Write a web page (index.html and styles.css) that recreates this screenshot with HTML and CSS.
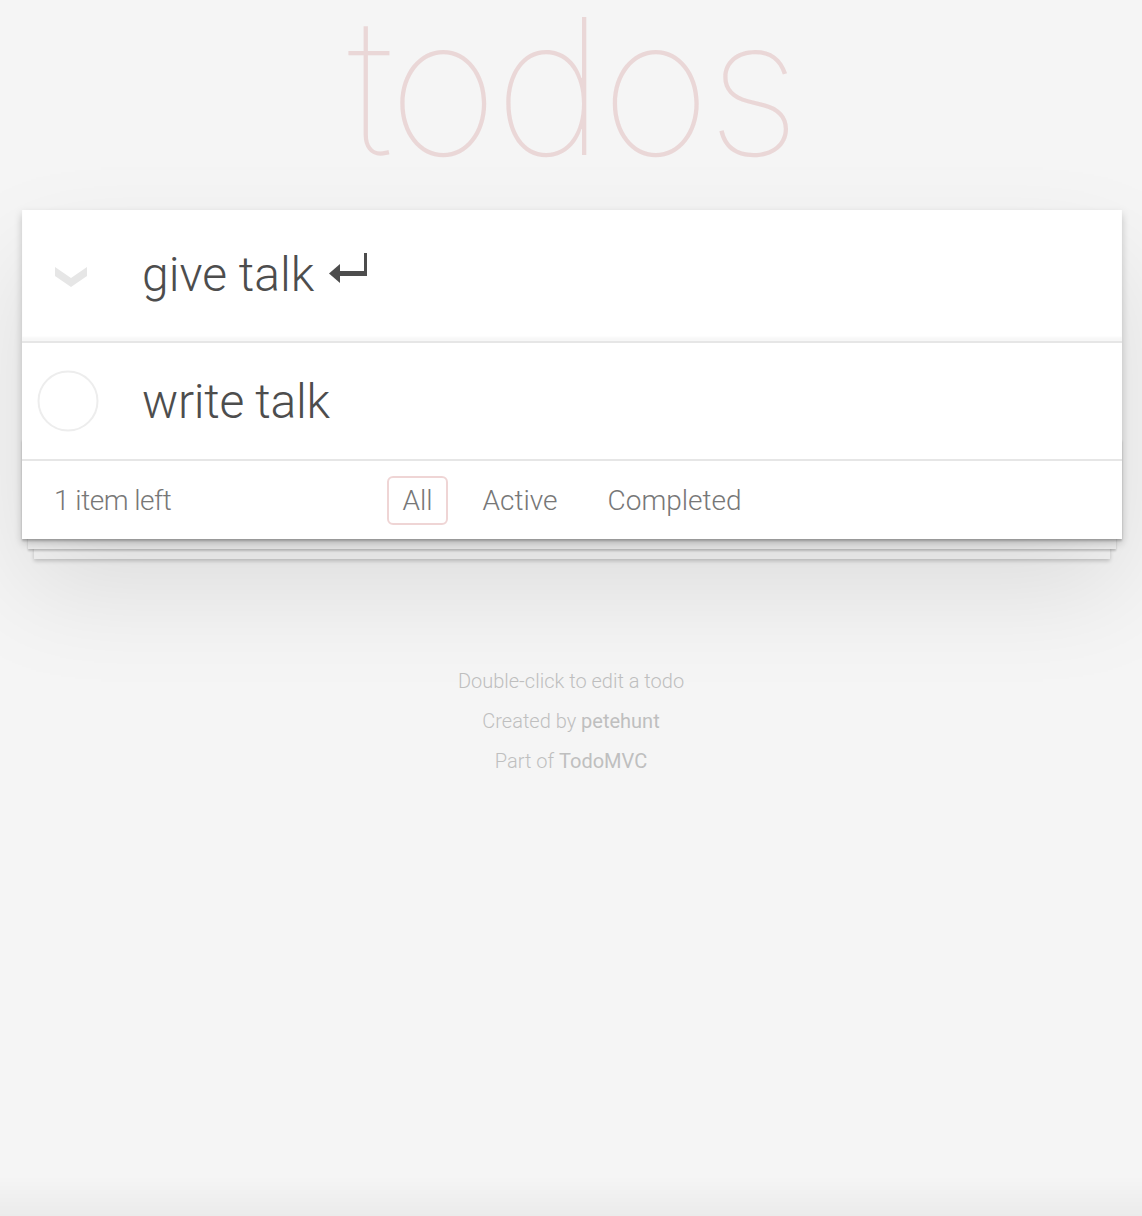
FILE: index.html
```html
<!DOCTYPE html>
<html lang="en">
<head>
<meta charset="utf-8">
<title>React • TodoMVC</title>
<link rel="stylesheet" href="styles.css">
</head>
<body>
<section class="todoapp">
  <header class="header">
    <h1 class="title">todos</h1>
  </header>
  <div class="card">
    <div class="new-row">
      <div class="toggle-all-cell">
        <svg class="chevron" width="32" height="22" viewBox="0 0 32 22"><polygon points="0,0 16,11 32,0 32,9 16,20 0,9" fill="#e6e6e6"/></svg>
      </div>
      <div class="new-text">give talk<svg class="return" width="40" height="32" viewBox="0 0 40 32"><rect x="35" y="0" width="3" height="23" fill="#4d4d4d"/><rect x="10" y="18" width="28" height="5" fill="#4d4d4d"/><polygon points="0,20.5 11,11 11,30" fill="#4d4d4d"/></svg></div>
    </div>
    <ul class="todo-list">
      <li class="todo">
        <div class="toggle-cell">
          <svg width="64" height="64" viewBox="0 0 64 64"><circle cx="32" cy="32" r="29.5" fill="none" stroke="#ededed" stroke-width="2"/></svg>
        </div>
        <label class="todo-label">write talk</label>
      </li>
    </ul>
    <footer class="footer">
      <span class="count">1 item left</span>
      <ul class="filters">
        <li><a class="filter selected">All</a></li>
        <li><a class="filter">Active</a></li>
        <li><a class="filter">Completed</a></li>
      </ul>
      <span class="spacer"></span>
    </footer>
  </div>
</section>
<footer class="info">
  <p>Double-click to edit a todo</p>
  <p>Created by <a>petehunt</a></p>
  <p>Part of <a>TodoMVC</a></p>
</footer>
<div class="bottom-fade"></div>
</body>
</html>
```
FILE: styles.css
```css
html, body {
  margin: 0;
  padding: 0;
}
body {
  background: #f5f5f5;
  color: #4d4d4d;
  font-family: "Roboto", "Liberation Sans", sans-serif;
  font-weight: 300;
  min-height: 1216px;
}
.todoapp {
  width: 1100px;
  margin: 0 auto 0 calc(50% - 549px);
}
.header {
  height: 210px;
}
.title {
  margin: 0;
  font-family: "Inter", "Roboto", sans-serif;
  font-size: 190px;
  font-weight: 100;
  line-height: 172px;
  text-align: center;
  color: rgba(175, 47, 47, 0.15);
  letter-spacing: -4px;
}
.card {
  background: #fff;
  position: relative;
  box-shadow: 0 4px 8px 0 rgba(0,0,0,0.2), 0 50px 100px 0 rgba(0,0,0,0.1);
}
.new-row {
  height: 131px;
  display: flex;
  align-items: center;
  box-shadow: inset 0 -4px 2px rgba(0,0,0,0.03);
}
.toggle-all-cell {
  width: 120px;
  flex: none;
  display: flex;
  padding-left: 33px;
  box-sizing: border-box;
  padding-top: 4px;
}
.new-text {
  font-size: 48px;
  color: #4d4d4d;
  display: flex;
  align-items: center;
  margin-top: -2px;
}
.return {
  margin-left: 15px;
  margin-top: -12px;
}
.todo-list {
  list-style: none;
  margin: 0;
  padding: 0;
  border-top: 2px solid #e6e6e6;
}
.todo {
  height: 116px;
  display: flex;
  align-items: center;
}
.toggle-cell {
  width: 120px;
  flex: none;
  padding-left: 14px;
  box-sizing: border-box;
  display: flex;
}
.todo-label {
  font-size: 48px;
  color: #4d4d4d;
  letter-spacing: -0.3px;
}
.footer {
  border-top: 2px solid #e6e6e6;
  height: 80px;
  box-sizing: border-box;
  padding: 0 30px;
  display: grid;
  grid-template-columns: 1fr auto 1fr;
  align-items: center;
  color: #777;
  font-size: 28px;
  position: relative;
}
.footer::before {
  content: '';
  position: absolute;
  left: 0;
  right: 0;
  bottom: 0;
  height: 100px;
  z-index: -1;
  box-shadow: 0 2px 2px rgba(0,0,0,0.2), 0 16px 0 -6px #f6f6f6, 0 18px 2px -6px rgba(0,0,0,0.2), 0 32px 0 -12px #f6f6f6, 0 34px 4px -12px rgba(0,0,0,0.2);
}
.count {
  justify-self: start;
  padding-left: 2px;
  letter-spacing: -0.5px;
}
.filters {
  list-style: none;
  margin: 0;
  padding: 0;
  display: flex;
  gap: 8px;
}
.filter {
  display: block;
  margin: 6px;
  padding: 6px 13px;
  border: 2px solid transparent;
  border-radius: 6px;
  color: #777;
}
.filter.selected {
  border-color: rgba(175, 47, 47, 0.2);
}
.info {
  margin-top: 132px;
  text-align: center;
  color: #bfbfbf;
  font-size: 20px;
  line-height: 1;
}
.info p {
  margin: 20px 0;
}
.info a {
  font-weight: 400;
}
.bottom-fade {
  position: fixed;
  left: 0;
  right: 0;
  bottom: 0;
  height: 40px;
  background: linear-gradient(rgba(0,0,0,0), rgba(0,0,0,0.04));
  pointer-events: none;
}
```
